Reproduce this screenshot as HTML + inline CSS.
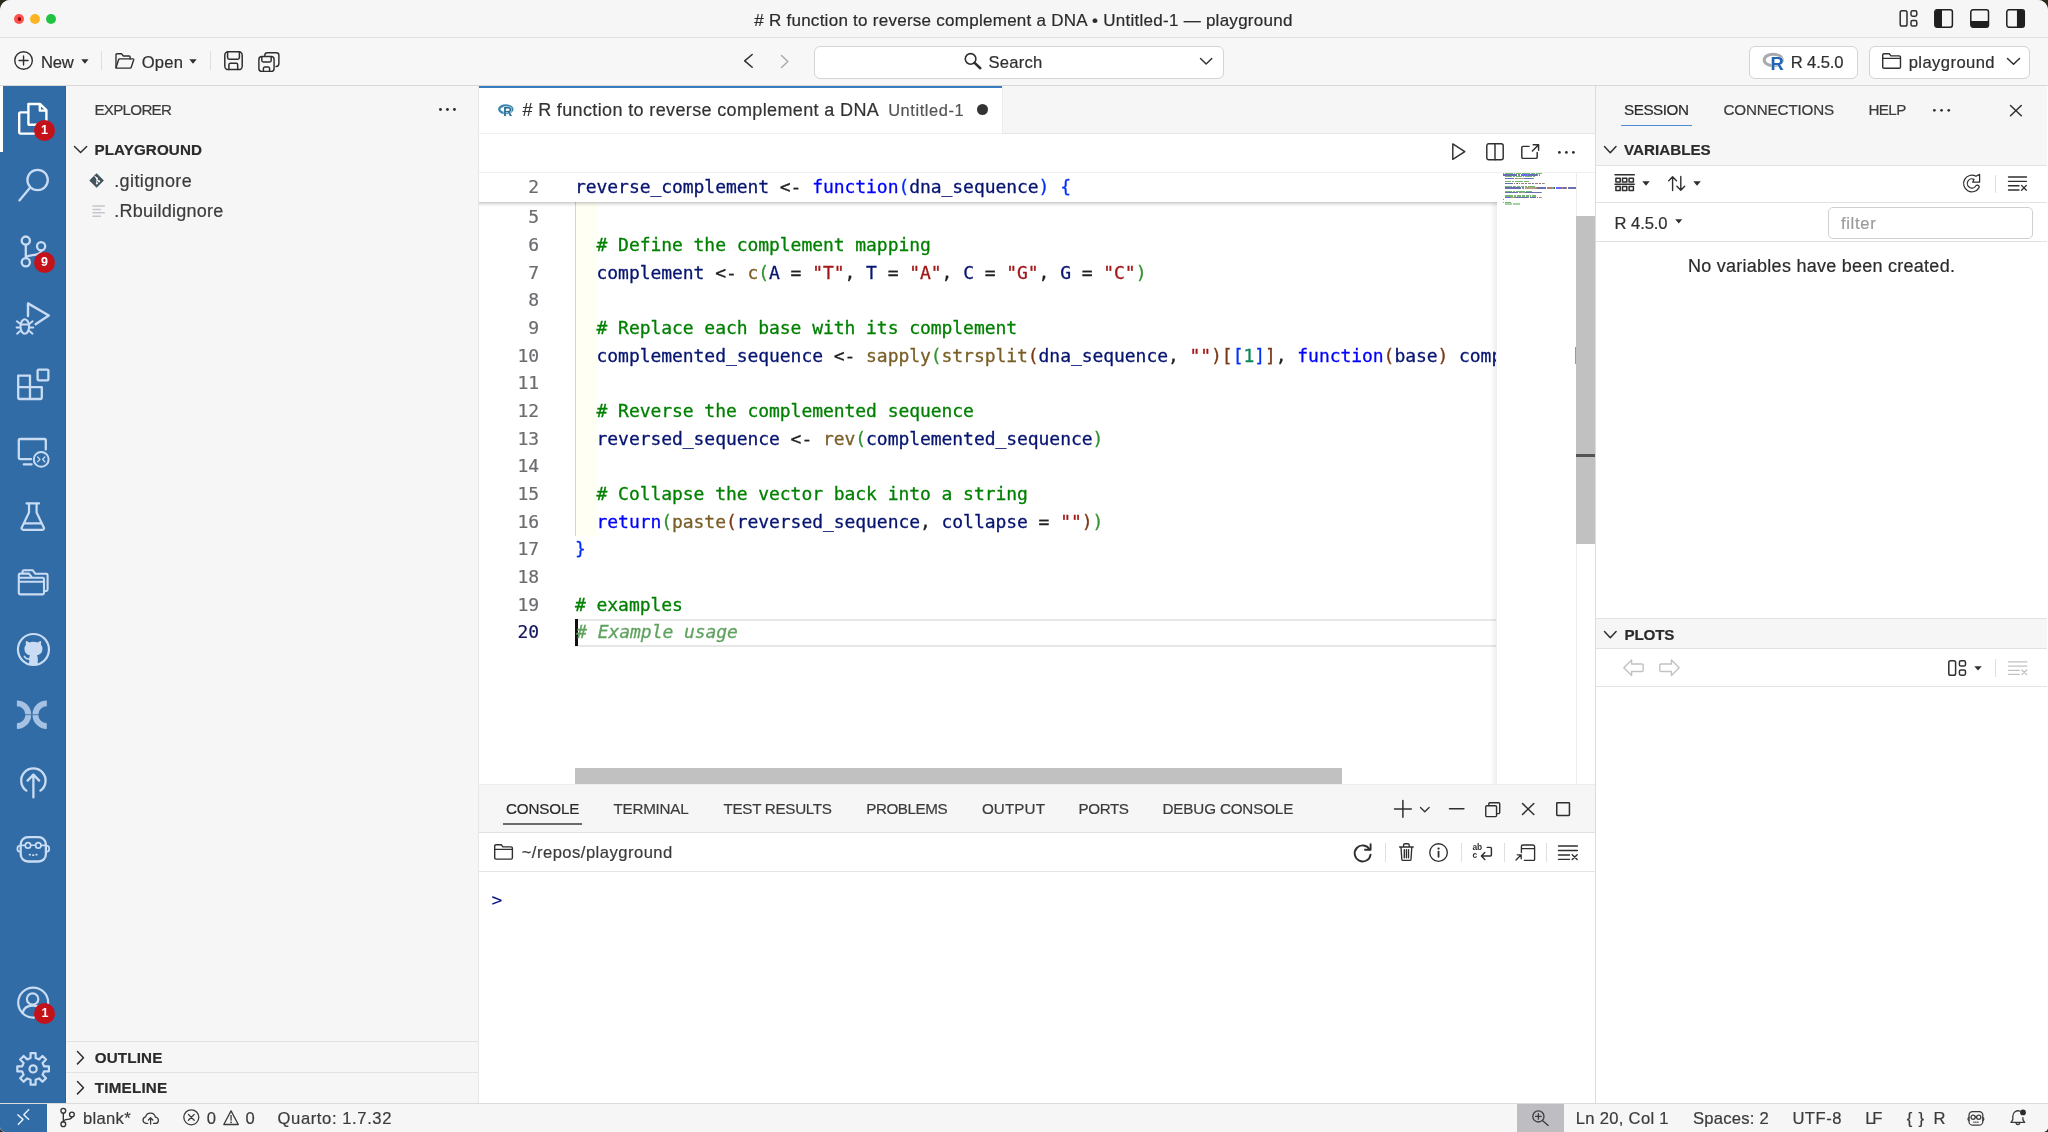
<!DOCTYPE html>
<html lang="en"><head><meta charset="utf-8"><title>Positron</title>
<style>
html,body{margin:0;padding:0;background:#2a2a1c;}
body{width:2048px;height:1132px;overflow:hidden;position:relative;font-family:"Liberation Sans",sans-serif;}
#win{will-change:transform;position:absolute;left:0;top:0;width:2048px;height:1132px;background:#f6f6f6;border-radius:10px 10px 5px 5px;overflow:hidden;}
.a{position:absolute;}
.t{position:absolute;white-space:pre;line-height:20px;-webkit-text-stroke:0.2px;}
svg{position:absolute;overflow:visible;}
.code{position:absolute;white-space:pre;font-family:"DejaVu Sans Mono","Liberation Mono",monospace;font-size:18px;letter-spacing:-0.056px;line-height:28px;height:28px;-webkit-text-stroke:0.3px;}
.ln{position:absolute;white-space:pre;font-family:"DejaVu Sans Mono","Liberation Mono",monospace;font-size:18px;letter-spacing:-0.056px;line-height:28px;height:28px;text-align:right;width:60px;left:479px;color:#6c6c70;-webkit-text-stroke:0.2px;}
.v{color:#061470}.k{color:#0000ff}.c{color:#008000}.s{color:#a31515}.f{color:#795e26}.n{color:#098658}.o{color:#1f1f1f}
.b1{color:#0431fa}.b2{color:#319331}.b3{color:#7b3814}
</style></head><body><div id="win">
<!-- title bar -->
<div class="a" style="left:0;top:0;width:2048px;height:37px;background:#f6f6f6;border-bottom:1px solid #e2e2e2"></div>
<div class="a" style="left:14px;top:14px;width:10px;height:10px;border-radius:50%;background:#ff5250;"></div>
<div class="a" style="left:17.5px;top:17.3px;width:3.4px;height:3.4px;border-radius:50%;background:#8a0808;"></div>
<div class="a" style="left:30.2px;top:14px;width:10px;height:10px;border-radius:50%;background:#fdb424;"></div>
<div class="a" style="left:46.3px;top:14px;width:10px;height:10px;border-radius:50%;background:#20c440;"></div>
<!-- action bar -->
<div class="a" style="left:0;top:38px;width:2048px;height:47px;background:#f7f7f7;border-bottom:1px solid #d9d9d9"></div>
<div class="a" style="left:101.3px;top:51.4px;width:1px;height:19px;background:#dfdfdf"></div>
<div class="a" style="left:210px;top:51.4px;width:1px;height:19px;background:#dfdfdf"></div>
<div class="a" style="left:813.5px;top:46px;width:408px;height:31px;border:1px solid #d4d4d4;border-radius:6px;background:#fff"></div>
<div class="a" style="left:1749.3px;top:46px;width:106.5px;height:31px;border:1px solid #d4d4d4;border-radius:6px;background:#fff"></div>
<div class="a" style="left:1869.3px;top:46px;width:158.5px;height:31px;border:1px solid #d4d4d4;border-radius:6px;background:#fff"></div>
<!-- activity bar -->
<div class="a" style="left:0;top:86px;width:65px;height:1017px;background:#316ca6;border-right:1px solid #2b62a2"></div>
<div class="a" style="left:0;top:86px;width:2.5px;height:66px;background:#fff"></div>
<!-- sidebar -->
<div class="a" style="left:66px;top:86px;width:412px;height:1017px;background:#f6f6f6;border-right:1px solid #e7e7e7"></div>
<div class="a" style="left:66px;top:1041px;width:412px;height:1px;background:#e2e2e2"></div>
<div class="a" style="left:66px;top:1072px;width:412px;height:1px;background:#e2e2e2"></div>
<!-- editor -->
<div class="a" style="left:479px;top:86px;width:1116px;height:698px;background:#fff"></div>
<div class="a" style="left:479px;top:86px;width:1116px;height:47px;background:#f6f6f6;border-bottom:1px solid #e6e6e6"></div>
<div class="a" style="left:479px;top:86px;width:523px;height:48px;background:#fff;border-right:1px solid #ececec"></div>
<div class="a" style="left:479px;top:86px;width:523px;height:1.5px;background:#3a7cc0"></div>
<div class="a" style="left:479px;top:133px;width:523px;height:1px;background:#f1f1f1"></div>
<div class="a" style="left:977.4px;top:103.9px;width:11px;height:11px;border-radius:50%;background:#333"></div>
<!-- editor body -->
<div class="a" id="ed" style="left:479px;top:173px;width:1017px;height:611px;overflow:hidden;background:#fff">
<div class="a" style="left:97px;top:28px;width:20.8px;height:334.6px;background:#fffff3"></div>
<div class="a" style="left:96px;top:28px;width:1px;height:334.6px;background:#d3d3d3"></div>
<div class="a" style="left:96px;top:445.7px;width:930px;height:24.1px;border-top:2px solid #e7e7e7;border-bottom:2px solid #e7e7e7"></div>
<div class="a" style="left:96px;top:446.4px;width:2.6px;height:26.3px;background:#111"></div>
<div class="ln" style="left:0;top:30.35px;color:#6c6c70">5</div>
<div class="ln" style="left:0;top:58.02px;color:#6c6c70">6</div>
<div class="code" style="left:96px;top:58.02px">  <span class="c"># Define the complement mapping</span></div>
<div class="ln" style="left:0;top:85.68px;color:#6c6c70">7</div>
<div class="code" style="left:96px;top:85.68px">  <span class="v">complement</span><span class="o"> &lt;- </span><span class="f">c</span><span class="b2">(</span><span class="v">A</span><span class="o"> = </span><span class="s">"T"</span><span class="o">, </span><span class="v">T</span><span class="o"> = </span><span class="s">"A"</span><span class="o">, </span><span class="v">C</span><span class="o"> = </span><span class="s">"G"</span><span class="o">, </span><span class="v">G</span><span class="o"> = </span><span class="s">"C"</span><span class="b2">)</span></div>
<div class="ln" style="left:0;top:113.35px;color:#6c6c70">8</div>
<div class="ln" style="left:0;top:141.02px;color:#6c6c70">9</div>
<div class="code" style="left:96px;top:141.02px">  <span class="c"># Replace each base with its complement</span></div>
<div class="ln" style="left:0;top:168.69px;color:#6c6c70">10</div>
<div class="code" style="left:96px;top:168.69px">  <span class="v">complemented_sequence</span><span class="o"> &lt;- </span><span class="f">sapply</span><span class="b2">(</span><span class="f">strsplit</span><span class="b3">(</span><span class="v">dna_sequence</span><span class="o">, </span><span class="s">""</span><span class="b3">)[</span><span class="b1">[</span><span class="n">1</span><span class="b1">]</span><span class="b3">]</span><span class="o">, </span><span class="k">function</span><span class="b3">(</span><span class="v">base</span><span class="b3">)</span> <span class="v">complement</span><span class="b3">[</span><span class="v">base</span><span class="b3">]</span><span class="b2">)</span></div>
<div class="ln" style="left:0;top:196.35px;color:#6c6c70">11</div>
<div class="ln" style="left:0;top:224.02px;color:#6c6c70">12</div>
<div class="code" style="left:96px;top:224.02px">  <span class="c"># Reverse the complemented sequence</span></div>
<div class="ln" style="left:0;top:251.69px;color:#6c6c70">13</div>
<div class="code" style="left:96px;top:251.69px">  <span class="v">reversed_sequence</span><span class="o"> &lt;- </span><span class="f">rev</span><span class="b2">(</span><span class="v">complemented_sequence</span><span class="b2">)</span></div>
<div class="ln" style="left:0;top:279.35px;color:#6c6c70">14</div>
<div class="ln" style="left:0;top:307.02px;color:#6c6c70">15</div>
<div class="code" style="left:96px;top:307.02px">  <span class="c"># Collapse the vector back into a string</span></div>
<div class="ln" style="left:0;top:334.69px;color:#6c6c70">16</div>
<div class="code" style="left:96px;top:334.69px">  <span class="k">return</span><span class="b2">(</span><span class="f">paste</span><span class="b3">(</span><span class="v">reversed_sequence</span><span class="o">, </span><span class="v">collapse</span><span class="o"> = </span><span class="s">""</span><span class="b3">)</span><span class="b2">)</span></div>
<div class="ln" style="left:0;top:362.35px;color:#6c6c70">17</div>
<div class="code" style="left:96px;top:362.35px"><span class="b1">}</span></div>
<div class="ln" style="left:0;top:390.02px;color:#6c6c70">18</div>
<div class="ln" style="left:0;top:417.69px;color:#6c6c70">19</div>
<div class="code" style="left:96px;top:417.69px"><span class="c"># examples</span></div>
<div class="ln" style="left:0;top:445.36px;color:#14145f">20</div>
<div class="code" style="left:96px;top:445.36px"><span style="color:#5fa25f;font-style:italic;margin-left:1.2px"># Example usage</span></div>
</div>
<!-- minimap + scrollbar -->
<div class="a" style="left:1490px;top:173px;width:7px;height:611px;background:linear-gradient(to right,rgba(0,0,0,0),rgba(0,0,0,0.07))"></div>
<div class="a" style="left:1497px;top:173px;width:98px;height:611px;background:#fff"></div>
<div class="a" style="left:1576px;top:173px;width:1px;height:611px;background:#ededed"></div>
<div class="a" style="left:1576px;top:216px;width:19px;height:328px;background:#c1c1c1"></div>
<div class="a" style="left:1576px;top:454px;width:19px;height:2.5px;background:#555"></div>
<div class="a" style="left:1574.6px;top:347px;width:1.2px;height:17px;background:#9a9a9a"></div>
<div class="a" style="left:1497px;top:173px;width:78.5px;height:611px;overflow:hidden"><div class="a" style="left:-1497px;top:-173px;width:0;height:0">
<div class="a" style="left:1503.3px;top:172.8px;width:0.8px;height:1.3px;background:#008000;opacity:0.55"></div>
<div class="a" style="left:1504.9px;top:172.8px;width:0.8px;height:1.3px;background:#008000;opacity:0.55"></div>
<div class="a" style="left:1506.4px;top:172.8px;width:6.3px;height:1.3px;background:#008000;opacity:0.55"></div>
<div class="a" style="left:1513.5px;top:172.8px;width:1.6px;height:1.3px;background:#008000;opacity:0.55"></div>
<div class="a" style="left:1515.9px;top:172.8px;width:5.5px;height:1.3px;background:#008000;opacity:0.55"></div>
<div class="a" style="left:1522.1px;top:172.8px;width:7.9px;height:1.3px;background:#008000;opacity:0.55"></div>
<div class="a" style="left:1530.8px;top:172.8px;width:0.8px;height:1.3px;background:#008000;opacity:0.55"></div>
<div class="a" style="left:1532.3px;top:172.8px;width:2.4px;height:1.3px;background:#008000;opacity:0.55"></div>
<div class="a" style="left:1535.5px;top:172.8px;width:6.3px;height:1.3px;background:#008000;opacity:0.55"></div>
<div class="a" style="left:1503.3px;top:174.4px;width:14.1px;height:1.3px;background:#001080;opacity:0.6"></div>
<div class="a" style="left:1518.2px;top:174.4px;width:1.6px;height:1.3px;background:#333333;opacity:0.6"></div>
<div class="a" style="left:1520.6px;top:174.4px;width:6.3px;height:1.3px;background:#0000ff;opacity:0.6"></div>
<div class="a" style="left:1526.8px;top:174.4px;width:0.8px;height:1.3px;background:#0431fa;opacity:0.6"></div>
<div class="a" style="left:1527.6px;top:174.4px;width:9.4px;height:1.3px;background:#001080;opacity:0.6"></div>
<div class="a" style="left:1537.1px;top:174.4px;width:0.8px;height:1.3px;background:#0431fa;opacity:0.6"></div>
<div class="a" style="left:1538.6px;top:174.4px;width:0.8px;height:1.3px;background:#0431fa;opacity:0.6"></div>
<div class="a" style="left:1504.9px;top:176.0px;width:0.8px;height:1.3px;background:#008000;opacity:0.55"></div>
<div class="a" style="left:1506.4px;top:176.0px;width:5.5px;height:1.3px;background:#008000;opacity:0.55"></div>
<div class="a" style="left:1512.7px;top:176.0px;width:2.4px;height:1.3px;background:#008000;opacity:0.55"></div>
<div class="a" style="left:1515.9px;top:176.0px;width:6.3px;height:1.3px;background:#008000;opacity:0.55"></div>
<div class="a" style="left:1522.9px;top:176.0px;width:1.6px;height:1.3px;background:#008000;opacity:0.55"></div>
<div class="a" style="left:1525.3px;top:176.0px;width:7.1px;height:1.3px;background:#008000;opacity:0.55"></div>
<div class="a" style="left:1533.1px;top:176.0px;width:2.4px;height:1.3px;background:#008000;opacity:0.55"></div>
<div class="a" style="left:1504.9px;top:177.6px;width:9.4px;height:1.3px;background:#001080;opacity:0.6"></div>
<div class="a" style="left:1515.1px;top:177.6px;width:1.6px;height:1.3px;background:#333333;opacity:0.6"></div>
<div class="a" style="left:1517.4px;top:177.6px;width:5.5px;height:1.3px;background:#795e26;opacity:0.6"></div>
<div class="a" style="left:1522.9px;top:177.6px;width:0.8px;height:1.3px;background:#319331;opacity:0.6"></div>
<div class="a" style="left:1523.7px;top:177.6px;width:9.4px;height:1.3px;background:#001080;opacity:0.6"></div>
<div class="a" style="left:1533.1px;top:177.6px;width:0.8px;height:1.3px;background:#319331;opacity:0.6"></div>
<div class="a" style="left:1504.9px;top:180.9px;width:0.8px;height:1.3px;background:#008000;opacity:0.55"></div>
<div class="a" style="left:1506.4px;top:180.9px;width:4.7px;height:1.3px;background:#008000;opacity:0.55"></div>
<div class="a" style="left:1511.9px;top:180.9px;width:2.4px;height:1.3px;background:#008000;opacity:0.55"></div>
<div class="a" style="left:1515.1px;top:180.9px;width:7.9px;height:1.3px;background:#008000;opacity:0.55"></div>
<div class="a" style="left:1523.7px;top:180.9px;width:5.5px;height:1.3px;background:#008000;opacity:0.55"></div>
<div class="a" style="left:1504.9px;top:182.5px;width:7.9px;height:1.3px;background:#001080;opacity:0.6"></div>
<div class="a" style="left:1513.5px;top:182.5px;width:1.6px;height:1.3px;background:#333333;opacity:0.6"></div>
<div class="a" style="left:1515.9px;top:182.5px;width:0.8px;height:1.3px;background:#795e26;opacity:0.6"></div>
<div class="a" style="left:1516.6px;top:182.5px;width:0.8px;height:1.3px;background:#319331;opacity:0.6"></div>
<div class="a" style="left:1517.4px;top:182.5px;width:0.8px;height:1.3px;background:#001080;opacity:0.6"></div>
<div class="a" style="left:1519.0px;top:182.5px;width:0.8px;height:1.3px;background:#333333;opacity:0.6"></div>
<div class="a" style="left:1520.6px;top:182.5px;width:2.4px;height:1.3px;background:#a31515;opacity:0.6"></div>
<div class="a" style="left:1522.9px;top:182.5px;width:0.8px;height:1.3px;background:#333333;opacity:0.6"></div>
<div class="a" style="left:1524.5px;top:182.5px;width:0.8px;height:1.3px;background:#001080;opacity:0.6"></div>
<div class="a" style="left:1526.1px;top:182.5px;width:0.8px;height:1.3px;background:#333333;opacity:0.6"></div>
<div class="a" style="left:1527.6px;top:182.5px;width:2.4px;height:1.3px;background:#a31515;opacity:0.6"></div>
<div class="a" style="left:1530.0px;top:182.5px;width:0.8px;height:1.3px;background:#333333;opacity:0.6"></div>
<div class="a" style="left:1531.6px;top:182.5px;width:0.8px;height:1.3px;background:#001080;opacity:0.6"></div>
<div class="a" style="left:1533.1px;top:182.5px;width:0.8px;height:1.3px;background:#333333;opacity:0.6"></div>
<div class="a" style="left:1534.7px;top:182.5px;width:2.4px;height:1.3px;background:#a31515;opacity:0.6"></div>
<div class="a" style="left:1537.1px;top:182.5px;width:0.8px;height:1.3px;background:#333333;opacity:0.6"></div>
<div class="a" style="left:1538.6px;top:182.5px;width:0.8px;height:1.3px;background:#001080;opacity:0.6"></div>
<div class="a" style="left:1540.2px;top:182.5px;width:0.8px;height:1.3px;background:#333333;opacity:0.6"></div>
<div class="a" style="left:1541.8px;top:182.5px;width:2.4px;height:1.3px;background:#a31515;opacity:0.6"></div>
<div class="a" style="left:1544.1px;top:182.5px;width:0.8px;height:1.3px;background:#319331;opacity:0.6"></div>
<div class="a" style="left:1504.9px;top:185.7px;width:0.8px;height:1.3px;background:#008000;opacity:0.55"></div>
<div class="a" style="left:1506.4px;top:185.7px;width:5.5px;height:1.3px;background:#008000;opacity:0.55"></div>
<div class="a" style="left:1512.7px;top:185.7px;width:3.1px;height:1.3px;background:#008000;opacity:0.55"></div>
<div class="a" style="left:1516.6px;top:185.7px;width:3.1px;height:1.3px;background:#008000;opacity:0.55"></div>
<div class="a" style="left:1520.6px;top:185.7px;width:3.1px;height:1.3px;background:#008000;opacity:0.55"></div>
<div class="a" style="left:1524.5px;top:185.7px;width:2.4px;height:1.3px;background:#008000;opacity:0.55"></div>
<div class="a" style="left:1527.6px;top:185.7px;width:7.9px;height:1.3px;background:#008000;opacity:0.55"></div>
<div class="a" style="left:1504.9px;top:187.3px;width:16.5px;height:1.3px;background:#001080;opacity:0.6"></div>
<div class="a" style="left:1522.1px;top:187.3px;width:1.6px;height:1.3px;background:#333333;opacity:0.6"></div>
<div class="a" style="left:1524.5px;top:187.3px;width:4.7px;height:1.3px;background:#795e26;opacity:0.6"></div>
<div class="a" style="left:1529.2px;top:187.3px;width:0.8px;height:1.3px;background:#319331;opacity:0.6"></div>
<div class="a" style="left:1530.0px;top:187.3px;width:6.3px;height:1.3px;background:#795e26;opacity:0.6"></div>
<div class="a" style="left:1536.3px;top:187.3px;width:0.8px;height:1.3px;background:#7b3814;opacity:0.6"></div>
<div class="a" style="left:1537.1px;top:187.3px;width:9.4px;height:1.3px;background:#001080;opacity:0.6"></div>
<div class="a" style="left:1546.5px;top:187.3px;width:0.8px;height:1.3px;background:#333333;opacity:0.6"></div>
<div class="a" style="left:1548.0px;top:187.3px;width:1.6px;height:1.3px;background:#a31515;opacity:0.6"></div>
<div class="a" style="left:1549.6px;top:187.3px;width:1.6px;height:1.3px;background:#7b3814;opacity:0.6"></div>
<div class="a" style="left:1551.2px;top:187.3px;width:0.8px;height:1.3px;background:#0431fa;opacity:0.6"></div>
<div class="a" style="left:1552.0px;top:187.3px;width:0.8px;height:1.3px;background:#098658;opacity:0.6"></div>
<div class="a" style="left:1552.8px;top:187.3px;width:0.8px;height:1.3px;background:#0431fa;opacity:0.6"></div>
<div class="a" style="left:1553.5px;top:187.3px;width:0.8px;height:1.3px;background:#7b3814;opacity:0.6"></div>
<div class="a" style="left:1554.3px;top:187.3px;width:0.8px;height:1.3px;background:#333333;opacity:0.6"></div>
<div class="a" style="left:1555.9px;top:187.3px;width:6.3px;height:1.3px;background:#0000ff;opacity:0.6"></div>
<div class="a" style="left:1562.2px;top:187.3px;width:0.8px;height:1.3px;background:#7b3814;opacity:0.6"></div>
<div class="a" style="left:1563.0px;top:187.3px;width:3.1px;height:1.3px;background:#001080;opacity:0.6"></div>
<div class="a" style="left:1566.1px;top:187.3px;width:0.8px;height:1.3px;background:#7b3814;opacity:0.6"></div>
<div class="a" style="left:1567.7px;top:187.3px;width:7.9px;height:1.3px;background:#001080;opacity:0.6"></div>
<div class="a" style="left:1575.5px;top:187.3px;width:0.8px;height:1.3px;background:#7b3814;opacity:0.6"></div>
<div class="a" style="left:1576.3px;top:187.3px;width:3.1px;height:1.3px;background:#001080;opacity:0.6"></div>
<div class="a" style="left:1579.4px;top:187.3px;width:0.8px;height:1.3px;background:#7b3814;opacity:0.6"></div>
<div class="a" style="left:1580.2px;top:187.3px;width:0.8px;height:1.3px;background:#319331;opacity:0.6"></div>
<div class="a" style="left:1504.9px;top:190.5px;width:0.8px;height:1.3px;background:#008000;opacity:0.55"></div>
<div class="a" style="left:1506.4px;top:190.5px;width:5.5px;height:1.3px;background:#008000;opacity:0.55"></div>
<div class="a" style="left:1512.7px;top:190.5px;width:2.4px;height:1.3px;background:#008000;opacity:0.55"></div>
<div class="a" style="left:1515.9px;top:190.5px;width:9.4px;height:1.3px;background:#008000;opacity:0.55"></div>
<div class="a" style="left:1526.1px;top:190.5px;width:6.3px;height:1.3px;background:#008000;opacity:0.55"></div>
<div class="a" style="left:1504.9px;top:192.1px;width:13.3px;height:1.3px;background:#001080;opacity:0.6"></div>
<div class="a" style="left:1519.0px;top:192.1px;width:1.6px;height:1.3px;background:#333333;opacity:0.6"></div>
<div class="a" style="left:1521.4px;top:192.1px;width:2.4px;height:1.3px;background:#795e26;opacity:0.6"></div>
<div class="a" style="left:1523.7px;top:192.1px;width:0.8px;height:1.3px;background:#319331;opacity:0.6"></div>
<div class="a" style="left:1524.5px;top:192.1px;width:16.5px;height:1.3px;background:#001080;opacity:0.6"></div>
<div class="a" style="left:1541.0px;top:192.1px;width:0.8px;height:1.3px;background:#319331;opacity:0.6"></div>
<div class="a" style="left:1504.9px;top:195.3px;width:0.8px;height:1.3px;background:#008000;opacity:0.55"></div>
<div class="a" style="left:1506.4px;top:195.3px;width:6.3px;height:1.3px;background:#008000;opacity:0.55"></div>
<div class="a" style="left:1513.5px;top:195.3px;width:2.4px;height:1.3px;background:#008000;opacity:0.55"></div>
<div class="a" style="left:1516.6px;top:195.3px;width:4.7px;height:1.3px;background:#008000;opacity:0.55"></div>
<div class="a" style="left:1522.1px;top:195.3px;width:3.1px;height:1.3px;background:#008000;opacity:0.55"></div>
<div class="a" style="left:1526.1px;top:195.3px;width:3.1px;height:1.3px;background:#008000;opacity:0.55"></div>
<div class="a" style="left:1530.0px;top:195.3px;width:0.8px;height:1.3px;background:#008000;opacity:0.55"></div>
<div class="a" style="left:1531.6px;top:195.3px;width:4.7px;height:1.3px;background:#008000;opacity:0.55"></div>
<div class="a" style="left:1504.9px;top:197.0px;width:4.7px;height:1.3px;background:#0000ff;opacity:0.6"></div>
<div class="a" style="left:1509.6px;top:197.0px;width:0.8px;height:1.3px;background:#319331;opacity:0.6"></div>
<div class="a" style="left:1510.4px;top:197.0px;width:3.9px;height:1.3px;background:#795e26;opacity:0.6"></div>
<div class="a" style="left:1514.3px;top:197.0px;width:0.8px;height:1.3px;background:#7b3814;opacity:0.6"></div>
<div class="a" style="left:1515.1px;top:197.0px;width:13.3px;height:1.3px;background:#001080;opacity:0.6"></div>
<div class="a" style="left:1528.4px;top:197.0px;width:0.8px;height:1.3px;background:#333333;opacity:0.6"></div>
<div class="a" style="left:1530.0px;top:197.0px;width:6.3px;height:1.3px;background:#001080;opacity:0.6"></div>
<div class="a" style="left:1537.1px;top:197.0px;width:0.8px;height:1.3px;background:#333333;opacity:0.6"></div>
<div class="a" style="left:1538.6px;top:197.0px;width:1.6px;height:1.3px;background:#a31515;opacity:0.6"></div>
<div class="a" style="left:1540.2px;top:197.0px;width:0.8px;height:1.3px;background:#7b3814;opacity:0.6"></div>
<div class="a" style="left:1541.0px;top:197.0px;width:0.8px;height:1.3px;background:#319331;opacity:0.6"></div>
<div class="a" style="left:1503.3px;top:198.6px;width:0.8px;height:1.3px;background:#0431fa;opacity:0.6"></div>
<div class="a" style="left:1503.3px;top:201.8px;width:0.8px;height:1.3px;background:#008000;opacity:0.55"></div>
<div class="a" style="left:1504.9px;top:201.8px;width:6.3px;height:1.3px;background:#008000;opacity:0.55"></div>
<div class="a" style="left:1504.9px;top:203.4px;width:0.8px;height:1.3px;background:#008000;opacity:0.35"></div>
<div class="a" style="left:1506.4px;top:203.4px;width:5.5px;height:1.3px;background:#008000;opacity:0.35"></div>
<div class="a" style="left:1512.7px;top:203.4px;width:3.9px;height:1.3px;background:#008000;opacity:0.35"></div>
<div class="a" style="left:1517.4px;top:203.4px;width:3.1px;height:1.3px;background:#008000;opacity:0.35"></div>
</div></div>
<!-- sticky line -->
<div class="a" style="left:479px;top:201.5px;width:1018px;height:5px;background:linear-gradient(to bottom,rgba(0,0,0,0.2),rgba(0,0,0,0.05) 60%,rgba(0,0,0,0))"></div>
<div class="a" style="left:479px;top:173px;width:1018px;height:28.5px;background:#fff;"></div>
<div class="ln" style="top:172.8px">2</div>
<div class="code" style="left:575px;top:172.8px"><span class="v">reverse_complement</span><span class="o"> &lt;- </span><span class="k">function</span><span class="b1">(</span><span class="v">dna_sequence</span><span class="b1">)</span> <span class="b1">{</span></div>
<div class="a" style="left:479px;top:134px;width:1116px;height:38px;background:#fff;border-bottom:1px solid #efefef"></div>
<!-- h scrollbar -->
<div class="a" style="left:575px;top:768px;width:767px;height:16px;background:#c1c1c1"></div>
<!-- bottom panel -->
<div class="a" style="left:479px;top:784px;width:1116px;height:319px;background:#fff"></div>
<div class="a" style="left:479px;top:784px;width:1116px;height:48px;background:#f6f6f6;border-bottom:1px solid #e2e2e2;border-top:1px solid #ececec;box-sizing:border-box;height:49px"></div>
<div class="a" style="left:503.3px;top:823.4px;width:78.7px;height:1.4px;background:#6a6a6a"></div>
<div class="a" style="left:479px;top:871px;width:1116px;height:1px;background:#e4e4e4"></div>
<div class="a" style="left:1384.6px;top:843px;width:1px;height:19px;background:#dfdfdf"></div>
<div class="a" style="left:1460.6px;top:843px;width:1px;height:19px;background:#dfdfdf"></div>
<div class="a" style="left:1503.5px;top:843px;width:1px;height:19px;background:#dfdfdf"></div>
<div class="a" style="left:1546.2px;top:843px;width:1px;height:19px;background:#dfdfdf"></div>
<div class="code" style="left:491.4px;top:886px;color:#001080;-webkit-text-stroke:0">&gt;</div>
<!-- right panel -->
<div class="a" style="left:1595px;top:86px;width:453px;height:1017px;background:#fff;border-left:1px solid #dcdcdc"></div>
<div class="a" style="left:1596px;top:86px;width:452px;height:80px;background:#f6f6f6;border-bottom:1px solid #e2e2e2;box-sizing:border-box"></div>
<div class="a" style="left:1621px;top:124.6px;width:71px;height:1.6px;background:#4f8bd3"></div>
<div class="a" style="left:1596px;top:202.4px;width:452px;height:1px;background:#e2e2e2"></div>
<div class="a" style="left:1596px;top:241.2px;width:452px;height:1px;background:#e2e2e2"></div>
<div class="a" style="left:1994.5px;top:174.6px;width:1px;height:18px;background:#dfdfdf"></div>
<div class="a" style="left:1828.4px;top:206.5px;width:202.4px;height:30px;border:1px solid #d0d0d0;border-radius:5px;background:#fff"></div>
<div class="a" style="left:1596px;top:617.6px;width:452px;height:31.4px;background:#f6f6f6;border-top:1px solid #e2e2e2;border-bottom:1px solid #e2e2e2;box-sizing:border-box"></div>
<div class="a" style="left:1596px;top:686px;width:452px;height:1px;background:#e4e4e4"></div>
<div class="a" style="left:1994.5px;top:659px;width:1px;height:18px;background:#dfdfdf"></div>
<div class="a" style="left:2046.5px;top:86px;width:1.5px;height:1017px;background:#fff"></div>
<!-- status bar -->
<div class="a" style="left:0;top:1103px;width:2048px;height:29px;background:#f6f6f6;border-top:1px solid #dcdcdc;box-sizing:border-box"></div>
<div class="a" style="left:0;top:1104px;width:47px;height:28px;background:#316ca6"></div>
<div class="a" style="left:1517px;top:1104px;width:47px;height:28px;background:#bdbdc2"></div>
<svg style="left:1899.10px;top:10.20px" width="18.60" height="16.80" viewBox="0 0 18.6 16.8" preserveAspectRatio="none" fill="none" stroke="#2f2f2f" stroke-width="1.5" stroke-linecap="round" stroke-linejoin="round" ><rect x="1.2" y="0.8" width="6.8" height="15.2" rx="1.8"/><rect x="12" y="0.8" width="5.8" height="5.4" rx="1.6"/><rect x="12" y="10.6" width="5.8" height="5.4" rx="1.6"/></svg>
<svg style="left:1934.00px;top:9.00px" width="19.20" height="19.00" viewBox="0 0 19.2 19" preserveAspectRatio="none" fill="none" stroke="#1f1f1f" stroke-width="1.5" stroke-linecap="round" stroke-linejoin="round" ><rect x="0.8" y="0.8" width="17.6" height="17.4" rx="2.1"/><path d="M1 3 a2 2 0 0 1 2-2 H8 V18 H3 a2 2 0 0 1 -2-2 Z" fill="#1f1f1f" stroke="none"/></svg>
<svg style="left:1970.00px;top:9.00px" width="19.30" height="19.00" viewBox="0 0 19.2 19" preserveAspectRatio="none" fill="none" stroke="#1f1f1f" stroke-width="1.5" stroke-linecap="round" stroke-linejoin="round" ><rect x="0.8" y="0.8" width="17.6" height="17.4" rx="2.1"/><path d="M1 12 H18.2 V16 a2 2 0 0 1 -2 2 H3 a2 2 0 0 1 -2 -2 Z" fill="#1f1f1f" stroke="none"/></svg>
<svg style="left:2005.90px;top:9.00px" width="19.10" height="19.00" viewBox="0 0 19.2 19" preserveAspectRatio="none" fill="none" stroke="#1f1f1f" stroke-width="1.5" stroke-linecap="round" stroke-linejoin="round" ><rect x="0.8" y="0.8" width="17.6" height="17.4" rx="2.1"/><path d="M11 1 H16.2 a2 2 0 0 1 2 2 V16 a2 2 0 0 1 -2 2 H11 Z" fill="#1f1f1f" stroke="none"/></svg>
<svg style="left:13.90px;top:51.40px" width="19.10" height="19.00" viewBox="0 0 20 20" preserveAspectRatio="none" fill="none" stroke="#2f2f2f" stroke-width="1.45" stroke-linecap="round" stroke-linejoin="round" ><circle cx="10" cy="10" r="9.2"/><path d="M10 5.3 V14.7 M5.3 10 H14.7"/></svg>
<svg style="left:80.80px;top:58.90px" width="7.80" height="5.00" viewBox="0 0 8 5" preserveAspectRatio="none" fill="#2f2f2f" stroke="none" stroke-width="1.4" stroke-linecap="round" stroke-linejoin="round" ><path d="M0.3 0.3 H7.7 L4 4.8 Z"/></svg>
<svg style="left:115.00px;top:52.80px" width="19.60" height="15.80" viewBox="0 0 20 16" preserveAspectRatio="none" fill="none" stroke="#2f2f2f" stroke-width="1.4" stroke-linecap="round" stroke-linejoin="round" ><path d="M1 14.8 V1.9 a1.2 1.2 0 0 1 1.2-1.2 H6.6 l1.9 2.3 H14.3 a1.2 1.2 0 0 1 1.2 1.2 V6"/><path d="M1 15.2 L3.6 6.9 a1.3 1.3 0 0 1 1.2-.9 H18.4 a0.7 0.7 0 0 1 .7 .9 L16.6 14.4 a1.3 1.3 0 0 1 -1.2 .9 H1.2 Z"/></svg>
<svg style="left:189.30px;top:58.90px" width="8.00" height="5.00" viewBox="0 0 8 5" preserveAspectRatio="none" fill="#2f2f2f" stroke="none" stroke-width="1.4" stroke-linecap="round" stroke-linejoin="round" ><path d="M0.3 0.3 H7.7 L4 4.8 Z"/></svg>
<svg style="left:223.60px;top:51.00px" width="19.00" height="19.40" viewBox="0 0 19 19.4" preserveAspectRatio="none" fill="none" stroke="#2f2f2f" stroke-width="1.5" stroke-linecap="round" stroke-linejoin="round" ><rect x="0.8" y="0.8" width="17.4" height="17.8" rx="3.4"/><path d="M3.6 1 V6.6 a1.6 1.6 0 0 0 1.6 1.6 H13.8 a1.6 1.6 0 0 0 1.6-1.6 V1"/><path d="M4.9 18.4 V13.8 a1.6 1.6 0 0 1 1.6-1.6 H12.1 a1.6 1.6 0 0 1 1.6 1.6 V18.4"/></svg>
<svg style="left:258.00px;top:51.80px" width="21.70" height="20.20" viewBox="0 0 21.7 20.2" preserveAspectRatio="none" fill="none" stroke="#2f2f2f" stroke-width="1.45" stroke-linecap="round" stroke-linejoin="round" ><path d="M6.8 3.4 a2.6 2.6 0 0 1 2.4-2.6 H18.4 a2.5 2.5 0 0 1 2.5 2.5 V11.4 a3.2 3.2 0 0 1 -2.8 3.2"/><rect x="0.9" y="4.6" width="15.2" height="14.8" rx="3"/><path d="M3.8 4.8 V8.6 a1.4 1.4 0 0 0 1.4 1.4 H11.8 a1.4 1.4 0 0 0 1.4-1.4 V4.8"/><path d="M5.4 19.2 V16.4 a1.3 1.3 0 0 1 1.3-1.3 H10.3 a1.3 1.3 0 0 1 1.3 1.3 V19.2"/></svg>
<svg style="left:744.00px;top:54.20px" width="8.70" height="13.80" viewBox="0 0 8.700000000000045 13.799999999999997" preserveAspectRatio="none" fill="none" stroke="#2f2f2f" stroke-width="1.5" stroke-linecap="round" stroke-linejoin="round" ><path d="M8.200000000000045 0.5 L0.7 6.899999999999999 L8.200000000000045 13.299999999999997"/></svg>
<svg style="left:781.20px;top:54.60px" width="7.60" height="13.00" viewBox="0 0 7.599999999999909 12.999999999999993" preserveAspectRatio="none" fill="none" stroke="#a8a8a8" stroke-width="1.4" stroke-linecap="round" stroke-linejoin="round" ><path d="M0.5 0.5 L6.899999999999909 6.4999999999999964 L0.5 12.499999999999993"/></svg>
<svg style="left:963.70px;top:52.70px" width="17.60" height="16.20" viewBox="0 0 17.6 16.2" preserveAspectRatio="none" fill="none" stroke="#2f2f2f" stroke-width="1.4" stroke-linecap="round" stroke-linejoin="round" ><circle cx="6.6" cy="5.9" r="5.3" stroke-width="1.6"/><path d="M10.6 9.9 L16.3 15.2" stroke-width="2.6"/></svg>
<svg style="left:1199.60px;top:58.20px" width="12.30" height="6.80" viewBox="0 0 12.300000000000182 6.799999999999997" preserveAspectRatio="none" fill="none" stroke="#2f2f2f" stroke-width="1.4" stroke-linecap="round" stroke-linejoin="round" ><path d="M0.5 0.5 L6.150000000000091 6.099999999999997 L11.800000000000182 0.5"/></svg>
<svg style="left:2007.00px;top:58.30px" width="13.00" height="6.90" viewBox="0 0 13 6.900000000000006" preserveAspectRatio="none" fill="none" stroke="#2f2f2f" stroke-width="1.5" stroke-linecap="round" stroke-linejoin="round" ><path d="M0.5 0.5 L6.5 6.2000000000000055 L12.5 0.5"/></svg>
<svg style="left:1881.70px;top:53.00px" width="19.20" height="15.90" viewBox="0 0 19 16" preserveAspectRatio="none" fill="none" stroke="#2f2f2f" stroke-width="1.4" stroke-linecap="round" stroke-linejoin="round" ><path d="M0.7 14 V2 a1.3 1.3 0 0 1 1.3-1.3 H7.2 l1.6 2.2 H17 a1.3 1.3 0 0 1 1.3 1.3 V14 a1.3 1.3 0 0 1 -1.3 1.3 H2 a1.3 1.3 0 0 1 -1.3-1.3 Z M0.7 5.4 H18.3"/></svg>
<svg style="left:1762.6px;top:53px" width="22" height="17.6" viewBox="0 0 22 17.6"><ellipse cx="10.2" cy="6.9" rx="9" ry="5.7" fill="none" stroke="#a9a9b0" stroke-width="3"/><text x="7.6" y="17.4" font-family="Liberation Sans, sans-serif" font-weight="700" font-size="18.5" fill="#2165b6" stroke="#fff" stroke-width="0.5" paint-order="stroke">R</text></svg>
<svg style="left:497px;top:102.6px" width="18" height="14.8" viewBox="0 0 18 14.8"><ellipse cx="8.8" cy="6.3" rx="6.6" ry="3.8" fill="none" stroke="#3f86b0" stroke-width="2.4"/><text x="6.2" y="13.3" font-family="Liberation Sans, sans-serif" font-weight="700" font-size="12.4" fill="#2f6f94" stroke="#d9f0fb" stroke-width="0.9" paint-order="stroke">R</text></svg>
<svg style="left:438.75px;top:108.35px" width="16.90" height="2.90" viewBox="-8.45 -1.45 16.9 2.9" preserveAspectRatio="none" fill="#2f2f2f" stroke="none" stroke-width="1.4" stroke-linecap="round" stroke-linejoin="round" ><circle cx="-7" cy="0" r="1.45"/><circle cx="0" cy="0" r="1.45"/><circle cx="7" cy="0" r="1.45"/></svg>
<svg style="left:73.90px;top:146.20px" width="13.20" height="7.20" viewBox="0 0 13.199999999999989 7.200000000000017" preserveAspectRatio="none" fill="none" stroke="#2f2f2f" stroke-width="1.5" stroke-linecap="round" stroke-linejoin="round" ><path d="M0.5 0.5 L6.599999999999994 6.500000000000017 L12.699999999999989 0.5"/></svg>
<svg style="left:77.00px;top:1050.60px" width="7.20" height="13.40" viewBox="0 0 7.200000000000003 13.400000000000091" preserveAspectRatio="none" fill="none" stroke="#2f2f2f" stroke-width="1.5" stroke-linecap="round" stroke-linejoin="round" ><path d="M0.5 0.5 L6.500000000000003 6.7000000000000455 L0.5 12.900000000000091"/></svg>
<svg style="left:77.00px;top:1081.10px" width="7.20" height="13.40" viewBox="0 0 7.200000000000003 13.400000000000091" preserveAspectRatio="none" fill="none" stroke="#2f2f2f" stroke-width="1.5" stroke-linecap="round" stroke-linejoin="round" ><path d="M0.5 0.5 L6.500000000000003 6.7000000000000455 L0.5 12.900000000000091"/></svg>
<svg style="left:88.80px;top:172.70px" width="15.20" height="15.10" viewBox="0 0 16 16" preserveAspectRatio="none" fill="none" stroke="#2f2f2f" stroke-width="1.4" stroke-linecap="round" stroke-linejoin="round" ><path d="M8 0.3 L15.7 8 L8 15.7 L0.3 8 Z" fill="#41535b" stroke="none"/><path d="M6.3 3.6 L8.3 5.6 V11.2 M8.3 6.6 L10.6 8.9" stroke="#f6f6f6" stroke-width="1.1" fill="none"/><circle cx="8.3" cy="5.6" r="1.1" fill="#f6f6f6" stroke="none"/><circle cx="8.3" cy="11.2" r="1.1" fill="#f6f6f6" stroke="none"/><circle cx="10.7" cy="8.9" r="1.1" fill="#f6f6f6" stroke="none"/></svg>
<svg style="left:93.40px;top:204.60px" width="11.30" height="12.20" viewBox="0 0 11.3 12.2" preserveAspectRatio="none" fill="none" stroke="#c4c8cc" stroke-width="1.5" stroke-linecap="round" stroke-linejoin="round" stroke-linecap="butt"><path d="M0 1 H11.3 M0 4.4 H7.4 M0 7.8 H11.3 M0 11.2 H7.4"/></svg>
<svg style="left:1451.60px;top:143.40px" width="13.70" height="17.20" viewBox="0 0 13.7 17.2" preserveAspectRatio="none" fill="none" stroke="#2f2f2f" stroke-width="1.45" stroke-linecap="round" stroke-linejoin="round" ><path d="M0.8 0.9 L12.8 8.6 L0.8 16.3 Z"/></svg>
<svg style="left:1486.00px;top:142.70px" width="18.00" height="17.60" viewBox="0 0 18 17.6" preserveAspectRatio="none" fill="none" stroke="#2f2f2f" stroke-width="1.45" stroke-linecap="round" stroke-linejoin="round" ><rect x="0.8" y="0.8" width="16.4" height="16" rx="2"/><path d="M9 0.8 V16.8"/></svg>
<svg style="left:1521.00px;top:144.00px" width="18.40" height="15.20" viewBox="0 0 18.4 15.2" preserveAspectRatio="none" fill="none" stroke="#2f2f2f" stroke-width="1.45" stroke-linecap="round" stroke-linejoin="round" ><path d="M8 2.4 H2 a1.2 1.2 0 0 0 -1.2 1.2 V13.2 a1.2 1.2 0 0 0 1.2 1.2 H15 a1.2 1.2 0 0 0 1.2-1.2 V8.6"/><path d="M11.4 7 L17.4 0.9 M12.2 0.8 H17.6 V6.2"/></svg>
<svg style="left:1557.90px;top:150.80px" width="16.80" height="2.80" viewBox="-8.4 -1.4 16.8 2.8" preserveAspectRatio="none" fill="#2f2f2f" stroke="none" stroke-width="1.4" stroke-linecap="round" stroke-linejoin="round" ><circle cx="-7" cy="0" r="1.4"/><circle cx="0" cy="0" r="1.4"/><circle cx="7" cy="0" r="1.4"/></svg>
<svg style="left:1933.05px;top:108.85px" width="17.10" height="2.70" viewBox="-8.55 -1.35 17.1 2.7" preserveAspectRatio="none" fill="#2f2f2f" stroke="none" stroke-width="1.4" stroke-linecap="round" stroke-linejoin="round" ><circle cx="-7.2" cy="0" r="1.35"/><circle cx="0" cy="0" r="1.35"/><circle cx="7.2" cy="0" r="1.35"/></svg>
<svg style="left:2009.80px;top:104.60px" width="11.80" height="11.20" viewBox="0 0 11.799999999999955 11.200000000000003" preserveAspectRatio="none" fill="none" stroke="#2f2f2f" stroke-width="1.5" stroke-linecap="round" stroke-linejoin="round" ><path d="M0.5 0.5 L11.299999999999955 10.700000000000003 M11.299999999999955 0.5 L0.5 10.700000000000003"/></svg>
<svg style="left:1603.90px;top:146.40px" width="12.50" height="7.40" viewBox="0 0 12.5 7.400000000000006" preserveAspectRatio="none" fill="none" stroke="#2f2f2f" stroke-width="1.5" stroke-linecap="round" stroke-linejoin="round" ><path d="M0.5 0.5 L6.25 6.7000000000000055 L12.0 0.5"/></svg>
<svg style="left:1615.00px;top:173.50px" width="19.30" height="18.30" viewBox="0 0 19.3 18.3" preserveAspectRatio="none" fill="none" stroke="#2f2f2f" stroke-width="1.5" stroke-linecap="round" stroke-linejoin="round" stroke-linecap="butt" stroke-linejoin="miter"><path d="M0 0.7 H19.3"/><rect x="0.9" y="4.2" width="4.3" height="3.9"/><rect x="7.5" y="4.2" width="4.3" height="3.9"/><rect x="14.1" y="4.2" width="4.3" height="3.9"/><rect x="0.9" y="12.6" width="4.3" height="3.9"/><rect x="7.5" y="12.6" width="4.3" height="3.9"/><rect x="14.1" y="12.6" width="4.3" height="3.9"/><path d="M0 10.3 H19.3"/></svg>
<svg style="left:1642.00px;top:180.80px" width="8.00" height="5.00" viewBox="0 0 8 5" preserveAspectRatio="none" fill="#2f2f2f" stroke="none" stroke-width="1.4" stroke-linecap="round" stroke-linejoin="round" ><path d="M0.3 0.3 H7.7 L4 4.8 Z"/></svg>
<svg style="left:1667.60px;top:176.00px" width="17.40" height="15.00" viewBox="0 0 17.4 15" preserveAspectRatio="none" fill="none" stroke="#2f2f2f" stroke-width="1.4" stroke-linecap="round" stroke-linejoin="round" ><path d="M4.6 14.5 V0.8 M0.7 4.8 L4.6 0.8 L8.5 4.8 M12.8 0.5 V14.2 M8.9 10.2 L12.8 14.2 L16.7 10.2"/></svg>
<svg style="left:1693.30px;top:180.80px" width="8.10" height="5.00" viewBox="0 0 8 5" preserveAspectRatio="none" fill="#2f2f2f" stroke="none" stroke-width="1.4" stroke-linecap="round" stroke-linejoin="round" ><path d="M0.3 0.3 H7.7 L4 4.8 Z"/></svg>
<svg style="left:1955.00px;top:168.00px" width="80.00" height="30.00" viewBox="1955 168 80 30" preserveAspectRatio="none" fill="none" stroke="#2f2f2f" stroke-width="1.25" stroke-linecap="round" stroke-linejoin="round" ><path d="M1976 176.3 A8.3 8.3 0 1 0 1979.1 187.6 A1.9 1.9 0 0 0 1975.9 185.7 A4.6 4.6 0 1 1 1974 179.3 L1972.7 182.2 L1979.6 182.2 L1979.6 174.4 Z"/></svg>
<svg style="left:2008.20px;top:176.00px" width="19.00" height="15.00" viewBox="0 0 19 15" preserveAspectRatio="none" fill="none" stroke="#2f2f2f" stroke-width="1.35" stroke-linecap="round" stroke-linejoin="round" ><path d="M0.5 1 H18.5 M0.5 5.3 H18.5 M0.5 9.7 H11 M0.5 14 H11 M13.6 9.4 L18.3 14.2 M18.3 9.4 L13.6 14.2"/></svg>
<svg style="left:1674.50px;top:219.40px" width="7.50" height="4.80" viewBox="0 0 8 5" preserveAspectRatio="none" fill="#2f2f2f" stroke="none" stroke-width="1.4" stroke-linecap="round" stroke-linejoin="round" ><path d="M0.3 0.3 H7.7 L4 4.8 Z"/></svg>
<svg style="left:1603.50px;top:630.90px" width="12.60" height="7.40" viewBox="0 0 12.599999999999909 7.399999999999977" preserveAspectRatio="none" fill="none" stroke="#2f2f2f" stroke-width="1.5" stroke-linecap="round" stroke-linejoin="round" ><path d="M0.5 0.5 L6.2999999999999545 6.699999999999977 L12.099999999999909 0.5"/></svg>
<svg style="left:1623.00px;top:659.00px" width="21.00" height="17.50" viewBox="0 0 21 17.5" preserveAspectRatio="none" fill="none" stroke="#c2c2c2" stroke-width="1.4" stroke-linecap="round" stroke-linejoin="round" ><path d="M0.8 8.75 L8.6 0.9 V5 H19 a1.2 1.2 0 0 1 1.2 1.2 V11.3 a1.2 1.2 0 0 1 -1.2 1.2 H8.6 V16.6 Z"/></svg>
<svg style="left:1658.60px;top:659.00px" width="21.00" height="17.50" viewBox="0 0 21 17.5" preserveAspectRatio="none" fill="none" stroke="#c2c2c2" stroke-width="1.4" stroke-linecap="round" stroke-linejoin="round" ><path d="M20.2 8.75 L12.4 0.9 V5 H2 a1.2 1.2 0 0 0 -1.2 1.2 V11.3 a1.2 1.2 0 0 0 1.2 1.2 H12.4 V16.6 Z"/></svg>
<svg style="left:1947.90px;top:659.90px" width="18.30" height="16.00" viewBox="0 0 18.3 16" preserveAspectRatio="none" fill="none" stroke="#2f2f2f" stroke-width="1.5" stroke-linecap="round" stroke-linejoin="round" ><rect x="0.8" y="0.8" width="6.8" height="14.4" rx="1.8"/><rect x="11.4" y="0.8" width="6.1" height="5.3" rx="1.6"/><rect x="11.4" y="9.9" width="6.1" height="5.3" rx="1.6"/></svg>
<svg style="left:1973.50px;top:665.60px" width="8.00" height="4.80" viewBox="0 0 8 5" preserveAspectRatio="none" fill="#2f2f2f" stroke="none" stroke-width="1.4" stroke-linecap="round" stroke-linejoin="round" ><path d="M0.3 0.3 H7.7 L4 4.8 Z"/></svg>
<svg style="left:2007.80px;top:660.60px" width="19.40" height="14.40" viewBox="0 0 19 15" preserveAspectRatio="none" fill="none" stroke="#c2c2c2" stroke-width="1.35" stroke-linecap="round" stroke-linejoin="round" ><path d="M0.5 1 H18.5 M0.5 5.3 H18.5 M0.5 9.7 H11 M0.5 14 H11 M13.6 9.4 L18.3 14.2 M18.3 9.4 L13.6 14.2"/></svg>
<svg style="left:1393.60px;top:799.60px" width="17.80" height="17.80" viewBox="0 0 17.8 17.8" preserveAspectRatio="none" fill="none" stroke="#2f2f2f" stroke-width="1.5" stroke-linecap="round" stroke-linejoin="round" ><path d="M8.9 0.5 V17.3 M0.5 8.9 H17.3"/></svg>
<svg style="left:1419.60px;top:807.00px" width="9.60" height="5.40" viewBox="0 0 9.600000000000136 5.399999999999977" preserveAspectRatio="none" fill="none" stroke="#2f2f2f" stroke-width="1.3" stroke-linecap="round" stroke-linejoin="round" ><path d="M0.5 0.5 L4.800000000000068 4.699999999999977 L9.100000000000136 0.5"/></svg>
<svg style="left:1448.80px;top:808.40px" width="15.40" height="1.60" viewBox="0 0 15.4 1.6" preserveAspectRatio="none" fill="none" stroke="#2f2f2f" stroke-width="1.5" stroke-linecap="round" stroke-linejoin="round" ><path d="M0.5 0.8 H14.9"/></svg>
<svg style="left:1484.70px;top:801.60px" width="15.50" height="15.30" viewBox="0 0 15.5 15.3" preserveAspectRatio="none" fill="none" stroke="#2f2f2f" stroke-width="1.4" stroke-linecap="round" stroke-linejoin="round" ><rect x="0.75" y="3.8" width="10.8" height="10.8" rx="1"/><path d="M3.8 3.6 V1.8 a1 1 0 0 1 1-1 H13.7 a1 1 0 0 1 1 1 V10.6 a1 1 0 0 1 -1 1 H11.8"/></svg>
<svg style="left:1521.60px;top:803.20px" width="12.30" height="12.00" viewBox="0 0 12.300000000000182 12.0" preserveAspectRatio="none" fill="none" stroke="#2f2f2f" stroke-width="1.5" stroke-linecap="round" stroke-linejoin="round" ><path d="M0.5 0.5 L11.800000000000182 11.5 M11.800000000000182 0.5 L0.5 11.5"/></svg>
<svg style="left:1556.30px;top:801.80px" width="14.20" height="14.20" viewBox="0 0 14.2 14.2" preserveAspectRatio="none" fill="none" stroke="#2f2f2f" stroke-width="1.5" stroke-linecap="round" stroke-linejoin="round" ><rect x="0.75" y="0.75" width="12.7" height="12.7" rx="0.6"/></svg>
<svg style="left:493.80px;top:844.00px" width="19.10" height="15.80" viewBox="0 0 19 16" preserveAspectRatio="none" fill="none" stroke="#2f2f2f" stroke-width="1.4" stroke-linecap="round" stroke-linejoin="round" ><path d="M0.7 14 V2 a1.3 1.3 0 0 1 1.3-1.3 H7.2 l1.6 2.2 H17 a1.3 1.3 0 0 1 1.3 1.3 V14 a1.3 1.3 0 0 1 -1.3 1.3 H2 a1.3 1.3 0 0 1 -1.3-1.3 Z M0.7 5.4 H18.3"/></svg>
<svg style="left:1353.10px;top:842.60px" width="19.20" height="19.00" viewBox="0 0 19.2 19" preserveAspectRatio="none" fill="none" stroke="#2f2f2f" stroke-width="1.4" stroke-linecap="round" stroke-linejoin="round" ><path d="M16.6 6.4 A8 8 0 1 0 17.6 11.6" stroke-width="1.9"/><path d="M17.6 1.2 V6.8 H12" stroke-width="1.9"/></svg>
<svg style="left:1398.50px;top:843.20px" width="14.80" height="18.20" viewBox="0 0 14.8 18.2" preserveAspectRatio="none" fill="none" stroke="#2f2f2f" stroke-width="1.35" stroke-linecap="round" stroke-linejoin="round" ><path d="M0.6 4 H14.2 M4.6 3.8 V2 a1.2 1.2 0 0 1 1.2-1.2 H9 a1.2 1.2 0 0 1 1.2 1.2 V3.8 M2 4.2 L2.8 16.2 a1.2 1.2 0 0 0 1.2 1.2 H10.8 a1.2 1.2 0 0 0 1.2-1.2 L12.8 4.2 M5.3 6.6 V14.8 M7.4 6.6 V14.8 M9.5 6.6 V14.8"/></svg>
<svg style="left:1429.20px;top:842.60px" width="19.10" height="19.20" viewBox="0 0 19.1 19.2" preserveAspectRatio="none" fill="none" stroke="#2f2f2f" stroke-width="1.35" stroke-linecap="round" stroke-linejoin="round" ><circle cx="9.55" cy="9.6" r="8.8"/><path d="M9.55 8.6 V13.8" stroke-width="1.8"/><circle cx="9.55" cy="5.6" r="1.15" fill="#2f2f2f" stroke="none"/></svg>
<svg style="left:1471.50px;top:843.40px" width="20.50" height="18.20" viewBox="0 0 20.5 18.2" preserveAspectRatio="none" fill="none" stroke="#2f2f2f" stroke-width="1.4" stroke-linecap="round" stroke-linejoin="round" ><path d="M15.2 4.4 H18.4 a1 1 0 0 1 1 1 V12 a1 1 0 0 1 -1 1 H9.6 M12.8 9.6 L9.4 13 L12.800 16.400" stroke-width="1.45"/><text x="0.4" y="6.8" font-family="Liberation Sans, sans-serif" font-size="8.4" font-weight="700" fill="#2f2f2f" stroke="none">ab</text><text x="0.6" y="14.8" font-family="Liberation Sans, sans-serif" font-size="8.4" font-weight="700" fill="#2f2f2f" stroke="none">c</text></svg>
<svg style="left:1514.50px;top:843.60px" width="20.50" height="17.40" viewBox="0 0 20.5 17.4" preserveAspectRatio="none" fill="none" stroke="#2f2f2f" stroke-width="1.4" stroke-linecap="round" stroke-linejoin="round" ><path d="M6.4 8.6 V2.6 a1.6 1.6 0 0 1 1.6-1.6 H17.8 a1.8 1.8 0 0 1 1.8 1.8 V15.4 a1 1 0 0 1 -1 1 H9.4 M6.6 4.6 H19.4" stroke-width="1.35"/><path d="M1 16 L6 11 M2.2 10.8 H6.2 V14.8" stroke-width="1.3"/></svg>
<svg style="left:1557.70px;top:844.60px" width="19.90" height="15.40" viewBox="0 0 19 15" preserveAspectRatio="none" fill="none" stroke="#2f2f2f" stroke-width="1.35" stroke-linecap="round" stroke-linejoin="round" ><path d="M0.5 1 H18.5 M0.5 5.3 H18.5 M0.5 9.7 H11 M0.5 14 H11 M13.6 9.4 L18.3 14.2 M18.3 9.4 L13.6 14.2"/></svg>
<svg style="left:0.00px;top:1104.00px" width="80.00" height="28.00" viewBox="0 1104 80 28" preserveAspectRatio="none" fill="none" stroke="#333" stroke-width="1.35" stroke-linecap="round" stroke-linejoin="round" ><path d="M17.4 1114.5 L23 1119.4 L17.9 1124.8 M29.1 1109.2 L23.8 1114.7 L29.1 1119.7" stroke="#e8f3ff" stroke-width="1.4" stroke-linecap="butt"/><circle cx="63.3" cy="1110.8" r="2.4"/><circle cx="63.3" cy="1124.2" r="2.4"/><circle cx="71.9" cy="1114.5" r="2.4"/><path d="M63.3 1113.3 V1121.7 M71.9 1117 C71.9 1120.6 63.8 1118.2 63.4 1121.4"/></svg>
<svg style="left:141.60px;top:1112.00px" width="17.10" height="12.30" viewBox="0 0 17.1 12.3" preserveAspectRatio="none" fill="none" stroke="#3b3b3b" stroke-width="1.3" stroke-linecap="round" stroke-linejoin="round" ><path d="M5.6 11.4 H4 a3.3 3.3 0 0 1 -0.4-6.5 a5 5 0 0 1 9.8 0.3 a3.1 3.1 0 0 1 -0.2 6.2 H11.6 M8.6 12 V6 M6.4 8 L8.6 5.8 L10.8 8"/></svg>
<svg style="left:183.10px;top:1109.40px" width="16.60" height="16.60" viewBox="0 0 16.6 16.6" preserveAspectRatio="none" fill="none" stroke="#3b3b3b" stroke-width="1.3" stroke-linecap="round" stroke-linejoin="round" ><circle cx="8.3" cy="8.3" r="7.5"/><path d="M5.4 5.4 L11.2 11.2 M11.2 5.4 L5.4 11.2"/></svg>
<svg style="left:222.70px;top:1110.00px" width="16.10" height="15.40" viewBox="0 0 16.1 15.4" preserveAspectRatio="none" fill="none" stroke="#3b3b3b" stroke-width="1.3" stroke-linecap="round" stroke-linejoin="round" ><path d="M8.05 0.9 L15.3 14.5 H0.8 Z"/><path d="M8.05 5.6 V10.2"/><circle cx="8.05" cy="12.3" r="0.9" fill="#3b3b3b" stroke="none"/></svg>
<svg style="left:1532.00px;top:1109.90px" width="17.00" height="16.00" viewBox="0 0 17 16" preserveAspectRatio="none" fill="none" stroke="#3b3b3b" stroke-width="1.3" stroke-linecap="round" stroke-linejoin="round" ><circle cx="6.4" cy="6.4" r="5.6"/><path d="M10.4 10.4 L16.2 15.4 M6.4 3.6 V9.2 M3.6 6.4 H9.2"/></svg>
<svg style="left:1967.00px;top:1110.50px" width="17.80" height="14.80" viewBox="0 0 17.8 14.8" preserveAspectRatio="none" fill="none" stroke="#3b3b3b" stroke-width="1.25" stroke-linecap="round" stroke-linejoin="round" ><path d="M2 4 a3.4 3.4 0 0 1 3.4-3.4 H12.4 a3.4 3.4 0 0 1 3.4 3.4 V10.4 a3.8 3.8 0 0 1 -3.8 3.8 H5.8 a3.8 3.8 0 0 1 -3.8-3.8 Z"/><circle cx="6.1" cy="6.2" r="2.1"/><circle cx="11.7" cy="6.2" r="2.1"/><path d="M8.2 6 H9.6 M2 6.6 a1.6 1.6 0 0 0 0 3 M15.8 6.6 a1.6 1.6 0 0 1 0 3 M6.8 11.2 H7.2 M8.7 11.2 H9.1 M10.6 11.2 H11"/></svg>
<svg style="left:2009.50px;top:1109.00px" width="16.00" height="17.00" viewBox="0 0 16 17" preserveAspectRatio="none" fill="none" stroke="#3b3b3b" stroke-width="1.3" stroke-linecap="round" stroke-linejoin="round" ><path d="M10 2.2 A5.2 5.2 0 0 0 2.8 7.2 V10.6 L1 13.4 H14.6 L12.9 10.6 V8.6 M6 13.6 a1.9 1.9 0 0 0 3.8 0"/><circle cx="13" cy="3.4" r="2.9" fill="#2b2b2b" stroke="none"/></svg>
<svg style="left:0.00px;top:86.00px" width="66.00" height="66.00" viewBox="0 86 66 66" preserveAspectRatio="none" fill="none" stroke="#fff" stroke-width="2.4" stroke-linecap="round" stroke-linejoin="round" ><path d="M28.4 104 H40.2 L46.4 110.2 V123.4 a1.4 1.4 0 0 1 -1.4 1.4 H29.8 a1.4 1.4 0 0 1 -1.4-1.4 Z M39.8 104.2 V110.6 H46.2"/><path d="M28 112.4 H20.6 a1.4 1.4 0 0 0 -1.4 1.4 V132.2 a1.4 1.4 0 0 0 1.4 1.4 H35.2 a1.4 1.4 0 0 0 1.4-1.4 V125.2"/></svg>
<div class="a" style="left:34.1px;top:119.8px;width:21px;height:21px;border-radius:50%;background:#c4121a;color:#fff;font-weight:700;font-size:12.5px;line-height:21px;text-align:center;font-family:'Liberation Sans',sans-serif">1</div>
<svg style="left:0.00px;top:152.00px" width="66.00" height="66.00" viewBox="0 152 66 66" preserveAspectRatio="none" fill="none" stroke="#c9dcf3" stroke-width="2.3" stroke-linecap="round" stroke-linejoin="round" ><circle cx="37.6" cy="180" r="10.2"/><path d="M30 187.8 L19.4 200.4"/></svg>
<svg style="left:0.00px;top:218.00px" width="66.00" height="66.00" viewBox="0 218 66 66" preserveAspectRatio="none" fill="none" stroke="#c9dcf3" stroke-width="2.3" stroke-linecap="round" stroke-linejoin="round" ><circle cx="25.8" cy="240.6" r="4.1"/><circle cx="25.8" cy="262.2" r="4.1"/><circle cx="41.1" cy="246.2" r="4.1"/><path d="M25.8 244.8 V258 M41.1 250.4 C41.1 257 26.4 253.4 25.9 258"/></svg>
<div class="a" style="left:34.1px;top:251.7px;width:21px;height:21px;border-radius:50%;background:#c4121a;color:#fff;font-weight:700;font-size:12.5px;line-height:21px;text-align:center;font-family:'Liberation Sans',sans-serif">9</div>
<svg style="left:0.00px;top:284.00px" width="66.00" height="66.00" viewBox="0 284 66 66" preserveAspectRatio="none" fill="none" stroke="#c9dcf3" stroke-width="2.4" stroke-linecap="round" stroke-linejoin="round" ><path d="M28 316 V303.400 L48.800 315.500 L35.600 324.200"/><ellipse cx="24.800" cy="326.500" rx="4.300" ry="7.200" stroke-width="2.100"/><path d="M20.600 324.400 H29 M16.900 321.300 L19.700 323.500 M32.600 321.300 L29.900 323.500 M16.600 327.500 H19.700 M30 327.500 H33.200 M17.100 333.700 L19.900 331.300 M32.500 333.700 L29.700 331.300" stroke-width="2"/></svg>
<svg style="left:0.00px;top:350.00px" width="66.00" height="66.00" viewBox="0 350 66 66" preserveAspectRatio="none" fill="none" stroke="#c9dcf3" stroke-width="2.3" stroke-linecap="round" stroke-linejoin="round" ><path d="M18.2 375.6 H30 V387.2 H41.8 V397.6 a1.4 1.4 0 0 1 -1.4 1.4 H19.6 a1.4 1.4 0 0 1 -1.4-1.4 Z M18.2 387.2 H30 V399"/><rect x="37.6" y="369.6" width="10.8" height="10.8" rx="1.2"/></svg>
<svg style="left:0.00px;top:416.00px" width="66.00" height="66.00" viewBox="0 416 66 66" preserveAspectRatio="none" fill="none" stroke="#c9dcf3" stroke-width="2.3" stroke-linecap="round" stroke-linejoin="round" ><path d="M31 459.2 H20.2 a1.4 1.4 0 0 1 -1.4-1.4 V440.4 a1.4 1.4 0 0 1 1.4-1.4 H44.4 a1.4 1.4 0 0 1 1.4 1.4 V449.6 M23.8 464.4 H31.6"/><circle cx="41.2" cy="459.4" r="7.4" stroke-width="2"/><path d="M37.6 457 L40 459.4 L37.6 461.8 M44.8 457 L42.6 459.4 L44.8 461.8" stroke-width="1.3"/></svg>
<svg style="left:0.00px;top:482.00px" width="66.00" height="66.00" viewBox="0 482 66 66" preserveAspectRatio="none" fill="none" stroke="#c9dcf3" stroke-width="2.2" stroke-linecap="round" stroke-linejoin="round" ><path d="M26.6 503.4 H39 M29 503.6 V512.4 L21.8 527.4 a1.6 1.6 0 0 0 1.4 2.4 H42.4 a1.6 1.6 0 0 0 1.4-2.4 L36.6 512.4 V503.6 M24.8 523.4 H41"/></svg>
<svg style="left:0.00px;top:548.00px" width="66.00" height="66.00" viewBox="0 548 66 66" preserveAspectRatio="none" fill="none" stroke="#c9dcf3" stroke-width="2.1" stroke-linecap="round" stroke-linejoin="round" ><path d="M18.8 577.8 H42.6 a1.4 1.4 0 0 1 1.4 1.4 V593 a1.4 1.4 0 0 1 -1.4 1.4 H20.2 a1.4 1.4 0 0 1 -1.4-1.4 Z M18.8 581.8 H44 M18.8 578 V575 a1.4 1.4 0 0 1 1.4-1.4 H29 l3 4"/><path d="M22.6 573 V571.6 a1.4 1.4 0 0 1 1.4-1.4 H32.6 l2.8 3.6 H46.2 a1.4 1.4 0 0 1 1.4 1.4 V589.6 a1.4 1.4 0 0 1 -1.4 1.4 H44.4"/></svg>
<svg style="left:0.00px;top:614.00px" width="66.00" height="66.00" viewBox="0 614 66 66" preserveAspectRatio="none" fill="none" stroke="#c9dcf3" stroke-width="2.3" stroke-linecap="round" stroke-linejoin="round" ><circle cx="33.45" cy="649.5" r="15.5" stroke-width="2.2"/><g transform="translate(0.15,1.2)"><path d="M33.3 640.6 c-1.6 0-3 .2-4.2 .7 c-1.6-1.3-3.2-1.5-3.2-1.5 c-.6 1.6-.3 2.9 0 3.4 c-1 1.1-1.600 2.500-1.600 4.200 c0 4.600 2.600 6.200 5.600 6.800 c-.6 .6-.9 1.500-.9 2.700 v6.600 c2 .6 6.600 .6 8.600 0 v-6.600 c0-1.200-.3-2.100-.9-2.700 c3-.6 5.600-2.200 5.600-6.800 c0-1.700-.6-3.100-1.600-4.200 c.3-.5 .6-1.800 0-3.400 c0 0-1.600 .2-3.200 1.500 c-1.200-.5-2.600-.7-4.200-.7 Z" fill="#c9dcf3" stroke="none"/><path d="M29 657.600 c-2.600 .8-3.600-.8-4.800-2.400" stroke-width="1.600"/></g></svg>
<svg style="left:0.00px;top:680.00px" width="66.00" height="66.00" viewBox="0 680 66 66" preserveAspectRatio="none" fill="none" stroke="#c9dcf3" stroke-width="2.3" stroke-linecap="round" stroke-linejoin="round" ><path d="M16.900 703.300 A11.400 11.400 0 0 1 16.900 726.100" stroke="#a6c2e3" stroke-width="5.800" stroke-linecap="butt"/><path d="M46.800 703.300 A11.400 11.400 0 0 0 46.800 726.100" stroke="#a6c2e3" stroke-width="5.800" stroke-linecap="butt"/><path d="M24 714.700 H40" stroke="#316ca6" stroke-width="0.800"/></svg>
<svg style="left:0.00px;top:746.00px" width="66.00" height="66.00" viewBox="0 746 66 66" preserveAspectRatio="none" fill="none" stroke="#c9dcf3" stroke-width="2.3" stroke-linecap="round" stroke-linejoin="round" ><path d="M26.400 790.600 A12.200 12.200 0 1 1 40.400 790.600"/><path d="M33.400 797.400 V774.600 M27.600 780.600 L33.400 774.600 L39.200 780.600"/></svg>
<svg style="left:0.00px;top:812.00px" width="66.00" height="66.00" viewBox="0 812 66 66" preserveAspectRatio="none" fill="none" stroke="#c9dcf3" stroke-width="2.3" stroke-linecap="round" stroke-linejoin="round" ><rect x="20.700" y="837.100" width="25.200" height="24.400" rx="7.200"/><circle cx="28" cy="845.400" r="2.700" stroke-width="1.700"/><circle cx="38.300" cy="845.400" r="2.700" stroke-width="1.700"/><path d="M30.700 845.200 H35.600 M20.800 845.400 H25.300 M41 845.400 H45.800" stroke-width="1.600"/><path d="M19.400 845.800 a2 2.900 0 0 0 0 5.800 M47.200 845.800 a2 2.900 0 0 1 0 5.800" stroke-width="1.800"/><path d="M29.600 854.700 H30.200 M32.900 855.200 H33.500 M36.200 854.700 H36.800" stroke-width="1.700"/></svg>
<svg style="left:0.00px;top:970.00px" width="66.00" height="66.00" viewBox="0 970 66 66" preserveAspectRatio="none" fill="none" stroke="#c9dcf3" stroke-width="2.3" stroke-linecap="round" stroke-linejoin="round" ><circle cx="33.200" cy="1002.600" r="15" stroke-width="2.200"/><circle cx="32.600" cy="999" r="5.700" stroke-width="2.200"/><path d="M22.600 1013 C23.600 1008 27.600 1005.600 32.600 1005.600 C36 1005.600 38.600 1006.600 40.400 1008.400" stroke-width="2.200"/></svg>
<div class="a" style="left:34.4px;top:1003.3px;width:21px;height:21px;border-radius:50%;background:#c4121a;color:#fff;font-weight:700;font-size:12.5px;line-height:21px;text-align:center;font-family:'Liberation Sans',sans-serif">1</div>
<svg style="left:0.00px;top:1036.00px" width="66.00" height="66.00" viewBox="0 1036 66 66" preserveAspectRatio="none" fill="none" stroke="#c9dcf3" stroke-width="2.2" stroke-linecap="round" stroke-linejoin="round" ><path d="M30.57 1057.99 L30.60 1053.10 L35.60 1053.10 L35.63 1057.99 L39.03 1059.40 L42.50 1055.96 L46.04 1059.50 L42.60 1062.97 L44.01 1066.37 L48.90 1066.40 L48.90 1071.40 L44.01 1071.43 L42.60 1074.83 L46.04 1078.30 L42.50 1081.84 L39.03 1078.40 L35.63 1079.81 L35.60 1084.70 L30.60 1084.70 L30.57 1079.81 L27.17 1078.40 L23.70 1081.84 L20.16 1078.30 L23.60 1074.83 L22.19 1071.43 L17.30 1071.40 L17.30 1066.40 L22.19 1066.37 L23.60 1062.97 L20.16 1059.50 L23.70 1055.96 L27.17 1059.40 Z"/><circle cx="33.100" cy="1068.900" r="3.600"/></svg>
<span class="t" style="left:754.20px;top:10.80px;font-size:17px;color:#2b2b2b;letter-spacing:0.266px;"># R function to reverse complement a DNA • Untitled-1 — playground</span>
<span class="t" style="left:41.00px;top:52.70px;font-size:16.6px;color:#2f2f2f;letter-spacing:-0.252px;">New</span>
<span class="t" style="left:141.70px;top:52.70px;font-size:16.6px;color:#2f2f2f;letter-spacing:0.235px;">Open</span>
<span class="t" style="left:988.60px;top:53.00px;font-size:16.6px;color:#2f2f2f;letter-spacing:0.204px;">Search</span>
<span class="t" style="left:1790.70px;top:52.70px;font-size:16.6px;color:#2f2f2f;letter-spacing:-0.119px;">R 4.5.0</span>
<span class="t" style="left:1908.70px;top:52.70px;font-size:16.6px;color:#2f2f2f;letter-spacing:0.419px;">playground</span>
<span class="t" style="left:94.40px;top:100.30px;font-size:15.2px;color:#3b3b3b;letter-spacing:-0.731px;">EXPLORER</span>
<span class="t" style="left:94.40px;top:139.80px;font-size:15.2px;color:#2b2b2b;letter-spacing:0.110px;font-weight:700;">PLAYGROUND</span>
<span class="t" style="left:114.20px;top:170.80px;font-size:18px;color:#3b3b3b;letter-spacing:0.393px;">.gitignore</span>
<span class="t" style="left:114.20px;top:200.80px;font-size:18px;color:#3b3b3b;letter-spacing:0.252px;">.Rbuildignore</span>
<span class="t" style="left:94.70px;top:1047.80px;font-size:15.2px;color:#2b2b2b;letter-spacing:0.174px;font-weight:700;">OUTLINE</span>
<span class="t" style="left:94.70px;top:1078.30px;font-size:15.2px;color:#2b2b2b;letter-spacing:0.232px;font-weight:700;">TIMELINE</span>
<span class="t" style="left:522.40px;top:100.20px;font-size:18px;color:#333;letter-spacing:0.365px;"># R function to reverse complement a DNA</span>
<span class="t" style="left:888.20px;top:100.20px;font-size:16.4px;color:#555;letter-spacing:0.583px;">Untitled-1</span>
<span class="t" style="left:1624.00px;top:99.90px;font-size:15.2px;color:#2b2b2b;letter-spacing:-0.439px;">SESSION</span>
<span class="t" style="left:1723.50px;top:99.90px;font-size:15.2px;color:#3b3b3b;letter-spacing:-0.153px;">CONNECTIONS</span>
<span class="t" style="left:1868.40px;top:99.90px;font-size:15.2px;color:#3b3b3b;letter-spacing:-0.562px;">HELP</span>
<span class="t" style="left:1624.00px;top:140.10px;font-size:15.2px;color:#2b2b2b;letter-spacing:0.007px;font-weight:700;">VARIABLES</span>
<span class="t" style="left:1614.60px;top:213.70px;font-size:16.6px;color:#2f2f2f;letter-spacing:-0.086px;">R 4.5.0</span>
<span class="t" style="left:1840.90px;top:213.70px;font-size:16.6px;color:#9a9a9a;letter-spacing:0.708px;">filter</span>
<span class="t" style="left:1688.00px;top:256.20px;font-size:18px;color:#2b2b2b;letter-spacing:0.258px;">No variables have been created.</span>
<span class="t" style="left:1624.60px;top:624.50px;font-size:15.2px;color:#2b2b2b;letter-spacing:-0.210px;font-weight:700;">PLOTS</span>
<span class="t" style="left:506.00px;top:799.10px;font-size:15.2px;color:#2b2b2b;letter-spacing:-0.147px;">CONSOLE</span>
<span class="t" style="left:613.50px;top:799.10px;font-size:15.2px;color:#3b3b3b;letter-spacing:-0.228px;">TERMINAL</span>
<span class="t" style="left:723.50px;top:799.10px;font-size:15.2px;color:#3b3b3b;letter-spacing:-0.290px;">TEST RESULTS</span>
<span class="t" style="left:866.20px;top:799.10px;font-size:15.2px;color:#3b3b3b;letter-spacing:-0.415px;">PROBLEMS</span>
<span class="t" style="left:981.90px;top:799.10px;font-size:15.2px;color:#3b3b3b;letter-spacing:0.133px;">OUTPUT</span>
<span class="t" style="left:1078.60px;top:799.10px;font-size:15.2px;color:#3b3b3b;letter-spacing:-0.437px;">PORTS</span>
<span class="t" style="left:1162.50px;top:799.10px;font-size:15.2px;color:#3b3b3b;letter-spacing:-0.142px;">DEBUG CONSOLE</span>
<span class="t" style="left:521.70px;top:842.60px;font-size:16.6px;color:#3b3b3b;letter-spacing:0.475px;">~/repos/playground</span>
<span class="t" style="left:83.00px;top:1108.60px;font-size:16.6px;color:#3b3b3b;letter-spacing:0.292px;">blank*</span>
<span class="t" style="left:206.80px;top:1108.60px;font-size:16.6px;color:#3b3b3b;letter-spacing:-0.734px;">0</span>
<span class="t" style="left:245.40px;top:1108.60px;font-size:16.6px;color:#3b3b3b;letter-spacing:-0.034px;">0</span>
<span class="t" style="left:277.60px;top:1108.60px;font-size:16.6px;color:#3b3b3b;letter-spacing:0.593px;">Quarto: 1.7.32</span>
<span class="t" style="left:1575.70px;top:1109.20px;font-size:16.6px;color:#3b3b3b;letter-spacing:0.311px;">Ln 20, Col 1</span>
<span class="t" style="left:1693.00px;top:1109.20px;font-size:16.6px;color:#3b3b3b;letter-spacing:0.238px;">Spaces: 2</span>
<span class="t" style="left:1792.40px;top:1109.20px;font-size:16.6px;color:#3b3b3b;letter-spacing:0.496px;">UTF-8</span>
<span class="t" style="left:1865.20px;top:1109.20px;font-size:16.6px;color:#3b3b3b;letter-spacing:-2.175px;">LF</span>
<span class="t" style="left:1906.70px;top:1109.20px;font-size:16.6px;color:#3b3b3b;letter-spacing:6.206px;">{}</span>
<span class="t" style="left:1933.50px;top:1109.20px;font-size:16.6px;color:#3b3b3b;letter-spacing:-2.184px;">R</span>
</div></body></html>
